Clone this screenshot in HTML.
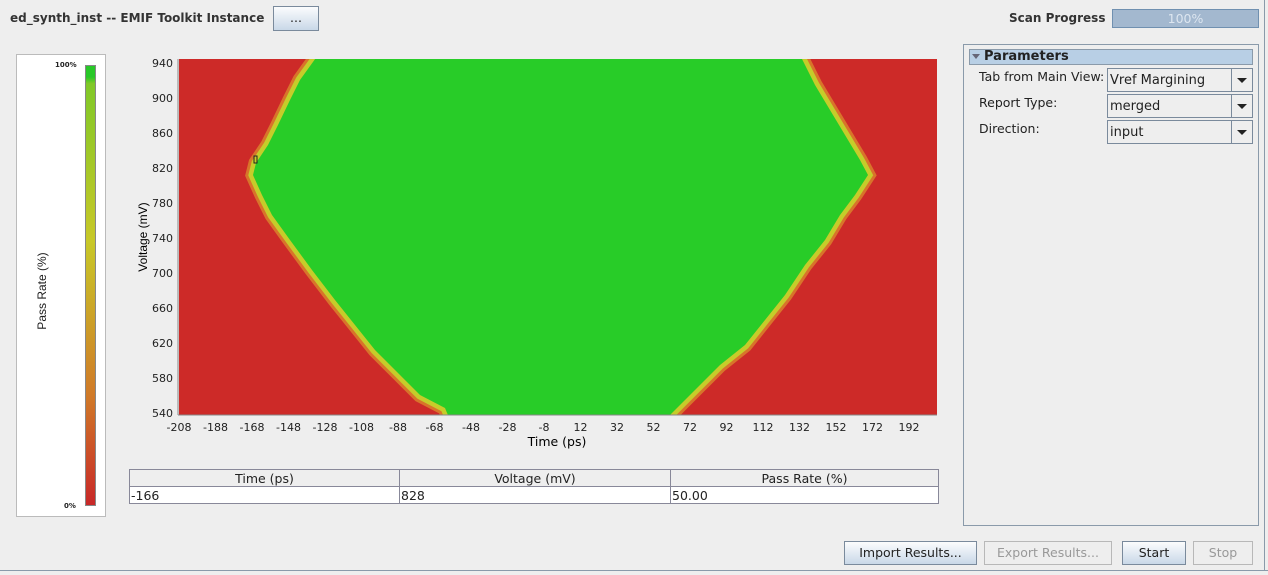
<!DOCTYPE html>
<html><head><meta charset="utf-8"><style>
body{margin:0;width:1268px;height:575px;background:#eeeeee;font-family:"DejaVu Sans","Liberation Sans",sans-serif;font-size:12.5px;color:#222;position:relative;overflow:hidden}
.a{position:absolute}
.btn{position:absolute;border:1px solid #7a8a9c;background:linear-gradient(#fbfcfd,#c9d8e8);text-align:center;line-height:21px;font-size:12.5px;box-sizing:border-box}
.dis{background:#eeeeee;border-color:#b8b8b8;color:#999}
.combo{position:absolute;left:1107px;width:146px;height:24px;border:1px solid #7a8a9c;background:#eee;box-sizing:border-box}
.combo span{position:absolute;left:2px;top:4px;font-size:13px}
.combo i{position:absolute;right:0;top:0;width:20px;height:22px;border-left:1px solid #7a8a9c}
.combo i:after{content:"";position:absolute;left:5px;top:9px;border-left:5px solid transparent;border-right:5px solid transparent;border-top:5px solid #222}
td{border-right:1px solid #889;padding:0 1px;height:16px;font-size:12.5px}
</style></head><body>
<div class="a" style="left:10px;top:11px;font-weight:bold;font-size:12px;color:#333">ed_synth_inst -- EMIF Toolkit Instance</div>
<div class="btn" style="left:273px;top:6px;width:46px;height:25px">...</div>
<div class="a" style="left:1009px;top:11px;font-weight:bold;font-size:12px;color:#333">Scan Progress</div>
<div class="a" style="left:1112px;top:9px;width:147px;height:19px;background:#a3b8cf;border:1px solid #7090b0;box-sizing:border-box;color:#dde6f0;text-align:center;line-height:17px;font-size:12.5px">100%</div>
<div class="a" style="left:0;top:570px;width:1268px;height:1px;background:#8a9aaa"></div>
<div class="a" style="left:1264px;top:0;width:1px;height:571px;background:#8a9aaa"></div>
<div class="a" style="left:16px;top:54px;width:90px;height:463px;background:#fff;border:1px solid #bbb;box-sizing:border-box"></div>
<div class="a" style="left:85px;top:65px;width:11px;height:441px;border:1px solid #888;box-sizing:border-box;background:linear-gradient(#28c828 0,#28c828 2.5%,#80c828 4%,#c8c828 40%,#d07a28 75%,#c82828 100%)"></div>
<div class="a" style="left:55px;top:61px;font-size:7px;font-weight:bold">100%</div>
<div class="a" style="left:64px;top:502px;font-size:7px;font-weight:bold">0%</div>
<div class="a" style="left:-8px;top:284px;transform:rotate(-90deg);font-family:'Liberation Sans',sans-serif;font-size:12px;width:100px;text-align:center">Pass Rate (%)</div>
<svg class="a" style="left:0;top:0" width="960" height="460">
<defs><clipPath id="c"><rect x="179" y="59" width="758" height="356"/></clipPath></defs>
<rect x="179" y="59" width="758" height="356" fill="#cd2a28"/>
<g clip-path="url(#c)">
<polygon points="318,55 300,80 290,100 278,125 268,145 256,163 253,175 262,195 272,215 290,240 312,270 335,300 355,325 375,350 400,375 420,395 445,408 450,420 665,420 680,405 700,385 720,365 745,345 765,320 785,295 805,265 825,240 840,215 855,195 868,175 860,160 845,135 830,110 815,85 800,55" fill="none" stroke="#d8742a" stroke-width="15"/>
<polygon points="318,55 300,80 290,100 278,125 268,145 256,163 253,175 262,195 272,215 290,240 312,270 335,300 355,325 375,350 400,375 420,395 445,408 450,420 665,420 680,405 700,385 720,365 745,345 765,320 785,295 805,265 825,240 840,215 855,195 868,175 860,160 845,135 830,110 815,85 800,55" fill="none" stroke="#c6cc2a" stroke-width="9"/>
<polygon points="318,55 300,80 290,100 278,125 268,145 256,163 253,175 262,195 272,215 290,240 312,270 335,300 355,325 375,350 400,375 420,395 445,408 450,420 665,420 680,405 700,385 720,365 745,345 765,320 785,295 805,265 825,240 840,215 855,195 868,175 860,160 845,135 830,110 815,85 800,55" fill="#28cc28"/>
</g>
<rect x="254" y="156" width="3" height="7" fill="none" stroke="#222" stroke-width="1"/>
<line x1="178" y1="59" x2="178" y2="415" stroke="#888"/>
<line x1="178" y1="415" x2="937" y2="415" stroke="#888"/>
<g font-size="11" fill="#222" text-anchor="end" font-family="DejaVu Sans,sans-serif">
<text x="173" y="67">940</text><text x="173" y="102">900</text><text x="173" y="137">860</text><text x="173" y="172">820</text><text x="173" y="207">780</text><text x="173" y="242">740</text><text x="173" y="277">700</text><text x="173" y="312">660</text><text x="173" y="347">620</text><text x="173" y="382">580</text><text x="173" y="417">540</text>
</g>
<g font-size="11" fill="#222" text-anchor="middle" font-family="DejaVu Sans,sans-serif">
<text x="179" y="431">-208</text><text x="215.5" y="431">-188</text><text x="252" y="431">-168</text><text x="288.5" y="431">-148</text><text x="325" y="431">-128</text><text x="361.5" y="431">-108</text><text x="398" y="431">-88</text><text x="434.5" y="431">-68</text><text x="471" y="431">-48</text><text x="507.5" y="431">-28</text><text x="544" y="431">-8</text><text x="580.5" y="431">12</text><text x="617" y="431">32</text><text x="653.5" y="431">52</text><text x="690" y="431">72</text><text x="726.5" y="431">92</text><text x="763" y="431">112</text><text x="799.5" y="431">132</text><text x="836" y="431">152</text><text x="872.5" y="431">172</text><text x="909" y="431">192</text>
</g>
<text x="557" y="446" font-size="12.5" text-anchor="middle" font-family="DejaVu Sans,sans-serif">Time (ps)</text>
<text x="147" y="237" font-size="12" text-anchor="middle" font-family="Liberation Sans,sans-serif" transform="rotate(-90 147 237)">Voltage (mV)</text>
</svg>
<table class="a" style="left:129px;top:469px;width:810px;border-collapse:collapse;border:1px solid #889;background:#fff" cellspacing="0">
<tr style="background:#eee"><td style="text-align:center;width:267px;border-bottom:1px solid #889">Time (ps)</td><td style="text-align:center;width:268px;border-bottom:1px solid #889">Voltage (mV)</td><td style="text-align:center;border-bottom:1px solid #889">Pass Rate (%)</td></tr>
<tr><td>-166</td><td>828</td><td>50.00</td></tr>
</table>
<div class="a" style="left:963px;top:44px;width:296px;height:482px;border:1px solid #8a9aaa;box-sizing:border-box"></div>
<div class="a" style="left:969px;top:49px;width:284px;height:16px;background:#b8cfe5;border:1px solid #8a9aaa;box-sizing:border-box;font-weight:bold;font-size:13px;line-height:14px;padding-left:14px">Parameters</div>
<div class="a" style="left:972px;top:54px;border-left:4px solid transparent;border-right:4px solid transparent;border-top:5px solid #667"></div>
<div class="a" style="left:979px;top:69px">Tab from Main View:</div>
<div class="a" style="left:979px;top:95px">Report Type:</div>
<div class="a" style="left:979px;top:121px">Direction:</div>
<div class="combo" style="top:68px"><span>Vref Margining</span><i></i></div>
<div class="combo" style="top:94px"><span>merged</span><i></i></div>
<div class="combo" style="top:120px"><span>input</span><i></i></div>
<div class="btn" style="left:844px;top:541px;width:133px;height:24px">Import Results...</div>
<div class="btn dis" style="left:984px;top:541px;width:128px;height:24px">Export Results...</div>
<div class="btn" style="left:1122px;top:541px;width:64px;height:24px">Start</div>
<div class="btn dis" style="left:1193px;top:541px;width:60px;height:24px">Stop</div>
</body></html>
